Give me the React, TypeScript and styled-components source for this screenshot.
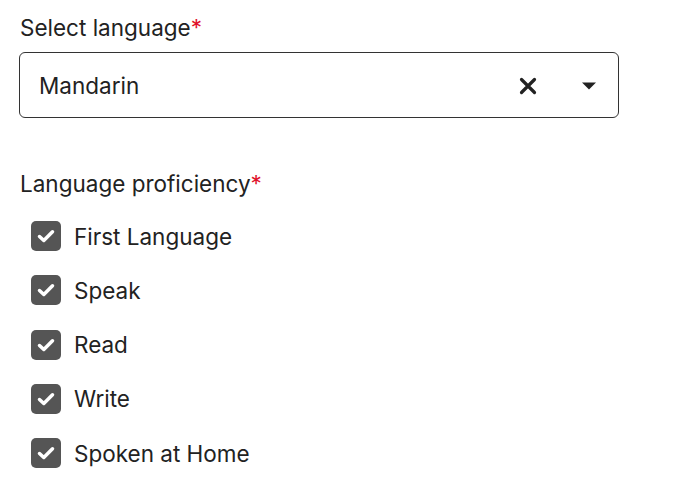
import React, { useState } from 'react';
import styled, { createGlobalStyle } from 'styled-components';

const GlobalStyle = createGlobalStyle`
  body {
    margin: 0;
    background: #ffffff;
    font-family: Inter, "Noto Sans", sans-serif;
    color: #222222;
  }
`;

const Page = styled.div`
  padding: 14px 61px 0 19px;
  display: flex;
  flex-direction: column;
`;

const Label = styled.div`
  font-size: 22.5px;
  line-height: 28px;
  color: #222222;
  padding-left: 1px;
`;

const Required = styled.span`
  color: #e0112b;
`;

const SelectBox = styled.div`
  margin-top: 10px;
  height: 63px;
  border: 1px solid #333333;
  border-radius: 6px;
  display: flex;
  align-items: center;
  padding: 1px 17px 0 19px;
`;

const Value = styled.div`
  flex: 1;
  font-size: 22.5px;
  color: #222222;
`;

const IconButton = styled.button`
  border: none;
  background: none;
  padding: 0;
  display: flex;
  align-items: center;
  justify-content: center;
  cursor: pointer;
  width: 24px;
  height: 24px;
`;

const Icons = styled.div`
  display: flex;
  align-items: center;
  gap: 37px;
`;

const Section = styled.div`
  margin-top: 52px;
`;

const List = styled.div`
  display: flex;
  flex-direction: column;
  gap: 24.25px;
  margin-top: 23px;
  padding-left: 12px;
`;

const Row = styled.label`
  display: flex;
  align-items: center;
  gap: 13px;
  font-size: 22.5px;
  color: #222222;
  cursor: pointer;
  height: 30px;
`;

const Box = styled.span<{ $checked: boolean }>`
  width: 30px;
  height: 30px;
  border-radius: 5px;
  background: ${p => (p.$checked ? '#555555' : '#ffffff')};
  border: ${p => (p.$checked ? 'none' : '2px solid #555555')};
  box-sizing: border-box;
  display: flex;
  align-items: center;
  justify-content: center;
`;

const options = ['First Language', 'Speak', 'Read', 'Write', 'Spoken at Home'];

export default function App() {
  const [checked, setChecked] = useState<boolean[]>(options.map(() => true));

  const toggle = (i: number) =>
    setChecked(c => c.map((v, j) => (j === i ? !v : v)));

  return (
    <>
      <GlobalStyle />
      <Page>
        <Label>
          Select language<Required>*</Required>
        </Label>
        <SelectBox>
          <Value>Mandarin</Value>
          <Icons>
            <IconButton aria-label="clear">
              <svg width="18" height="18" viewBox="0 0 18 18">
                <path d="M2.5 2.5 L15.5 15.5 M15.5 2.5 L2.5 15.5" stroke="#222" strokeWidth="3.2" strokeLinecap="round" />
              </svg>
            </IconButton>
            <IconButton aria-label="open">
              <svg width="16" height="10" viewBox="0 0 16 10">
                <path d="M1 1.5 L15 1.5 L8 8.5 Z" fill="#222" />
              </svg>
            </IconButton>
          </Icons>
        </SelectBox>

        <Section>
          <Label>
            Language proficiency<Required>*</Required>
          </Label>
          <List>
            {options.map((o, i) => (
              <Row key={o} onClick={() => toggle(i)}>
                <Box $checked={checked[i]}>
                  {checked[i] && (
                    <svg width="18" height="14" viewBox="0 0 18 14">
                      <path d="M2.5 7.5 L6.8 11.5 L15.5 2.8" stroke="#fff" strokeWidth="3.5" fill="none" strokeLinecap="round" strokeLinejoin="round" />
                    </svg>
                  )}
                </Box>
                {o}
              </Row>
            ))}
          </List>
        </Section>
      </Page>
    </>
  );
}
